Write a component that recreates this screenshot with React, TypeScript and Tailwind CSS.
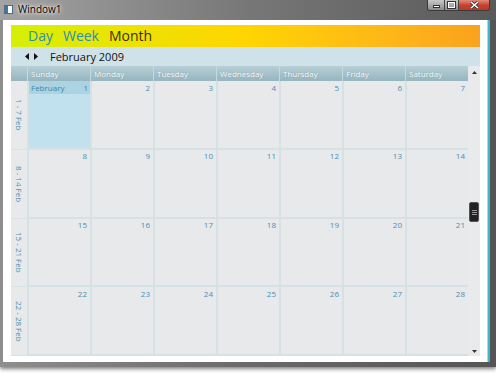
import React from "react";

const days = ["Sunday", "Monday", "Tuesday", "Wednesday", "Thursday", "Friday", "Saturday"];
const weeks = [
  { label: "1 - 7 Feb", start: 1 },
  { label: "8 - 14 Feb", start: 8 },
  { label: "15 - 21 Feb", start: 15 },
  { label: "22 - 28 Feb", start: 22 },
];

const font = { fontFamily: '"Open Sans", "Noto Sans", sans-serif' };

export default function App() {
  return (
    <div className="w-[496px] h-[373px] bg-white relative overflow-hidden" style={font}>
      <div className="w-[496px] h-[367px] flex flex-col bg-gradient-to-r from-[#8e8e8e] via-[#6a6a6a] to-[#555] shadow-[0_2px_4px_rgba(0,0,0,0.5)]">
        {/* title bar */}
        <div className="h-[20px] flex items-start relative bg-gradient-to-r from-[#a3a3a3] via-[#777] to-[#5a5a5a]">
          <div className="flex items-center gap-[5px] pl-[4px] pt-[4px]">
            <div className="w-[9px] h-[9px] bg-white border border-[#4d6f86] flex">
              <div className="w-[3px] h-full bg-[#3d7aa0]" />
            </div>
            <span className="text-[10px] leading-none text-black [text-shadow:0_0_6px_#fff,0_0_3px_#fff]">Window1</span>
          </div>
          <div className="ml-auto mr-[6px] flex h-[11px] rounded-b-[3px] overflow-hidden border border-t-0 border-[#3a3a3a]">
            <div className="w-[17px] bg-gradient-to-b from-[#c9c9c9] to-[#8c8c8c] flex items-center justify-center border-r border-[#444]">
              <div className="w-[7px] h-[3px] bg-white border border-[#333] mt-[3px]" />
            </div>
            <div className="w-[14px] bg-gradient-to-b from-[#c9c9c9] to-[#8c8c8c] flex items-center justify-center border-r border-[#444]">
              <div className="w-[7px] h-[6px] border-[1.5px] border-white outline outline-1 outline-[#333]" />
            </div>
            <div className="w-[30px] bg-gradient-to-b from-[#e08a7c] via-[#c9432f] to-[#b83a26] flex items-center justify-center">
              <svg width="9" height="8" viewBox="0 0 9 8">
                <path d="M1 1 L8 7 M8 1 L1 7" stroke="#333" strokeWidth="3" />
                <path d="M1 1 L8 7 M8 1 L1 7" stroke="#fff" strokeWidth="1.6" />
              </svg>
            </div>
          </div>
        </div>
        {/* body */}
        <div className="flex-1 flex pl-[3px] pr-[6px] pb-[5px]">
          <div className="flex-1 bg-white border-r border-[#ccc] pt-[5px] pl-[8px] pr-[7px] pb-[6px] flex flex-col">
            <div className="h-[22px] flex items-end gap-[10px] pl-[17px] pb-[1px] bg-gradient-to-r from-[#d5ef06] via-[#ffd500] to-[#fba21e]">
              <span className="text-[14px] leading-[20px] text-[#2e8fae]">Day</span>
              <span className="text-[14px] leading-[20px] text-[#2e8fae]">Week</span>
              <span className="text-[14px] leading-[20px] text-[#3a3000]">Month</span>
            </div>
            <div className="h-[19px] bg-[#cfe2e9] flex items-center pl-[14px]">
              <svg width="4" height="7" viewBox="0 0 4 7"><path d="M4 0 L0 3.5 L4 7 Z" fill="#111" /></svg>
              <svg width="4" height="7" viewBox="0 0 4 7" className="ml-[5px]"><path d="M0 0 L4 3.5 L0 7 Z" fill="#111" /></svg>
              <span className="text-[11px] text-[#111] ml-[12px] leading-none">February 2009</span>
            </div>
            <div className="flex-1 flex">
              <div className="flex-1 flex flex-col">
                <div className="h-[15px] flex bg-gradient-to-b from-[#b7cfd6] to-[#96b5bf]">
                  <div className="w-[16px]" />
                  {days.map((d) => (
                    <div key={d} className="w-[63px] border-l border-[#c6d9df] pl-[3px] text-[8px] leading-[15px] text-white [text-shadow:0_0_1px_#6d8e98]">
                      {d}
                    </div>
                  ))}
                </div>
                {weeks.map((w) => (
                  <div key={w.label} className="flex-1 flex">
                    <div className="w-[16px] bg-[#e8e9eb] flex items-center justify-center border-b border-[#d8e3e7]">
                      <span className="text-[8px] text-[#4a90b0] leading-none [writing-mode:vertical-rl] whitespace-nowrap">{w.label}</span>
                    </div>
                    {days.map((d, di) => {
                      const n = w.start + di;
                      const first = n === 1;
                      return (
                        <div key={d} className={`w-[63px] border-l-2 border-b-2 border-[#d6e1e6] flex flex-col ${first ? "bg-[#c1e1ee]" : "bg-[#e8e9eb]"}`}>
                          {first ? (
                            <div className="h-[13px] bg-[#acd3e2] flex items-center justify-between px-[2px] text-[8px] text-[#3d86a8] leading-none">
                              <span>February</span>
                              <span>1</span>
                            </div>
                          ) : (
                            <div className="h-[13px] flex items-center justify-end pr-[3px] text-[8px] text-[#4a8fb0] leading-none">{n}</div>
                          )}
                        </div>
                      );
                    })}
                  </div>
                ))}
              </div>
              <div className="w-[12px] bg-[#e9eaeb] flex flex-col items-center relative">
                <svg width="5" height="3" viewBox="0 0 5 3" className="mt-[5px]"><path d="M0 3 L2.5 0 L5 3 Z" fill="#333" /></svg>
                <div className="absolute top-[136px] left-[1px] w-[10px] h-[20px] rounded-[2px] bg-[#222] border border-[#555] flex flex-col items-center justify-center gap-[1px]">
                  <div className="w-[5px] h-[1px] bg-[#999]" />
                  <div className="w-[5px] h-[1px] bg-[#999]" />
                  <div className="w-[5px] h-[1px] bg-[#999]" />
                </div>
                <svg width="5" height="3" viewBox="0 0 5 3" className="mt-auto mb-[3px]"><path d="M0 0 L2.5 3 L5 0 Z" fill="#333" /></svg>
              </div>
            </div>
          </div>
          <div className="w-[2px] bg-[#3fb6c8]" />
        </div>
      </div>
    </div>
  );
}
